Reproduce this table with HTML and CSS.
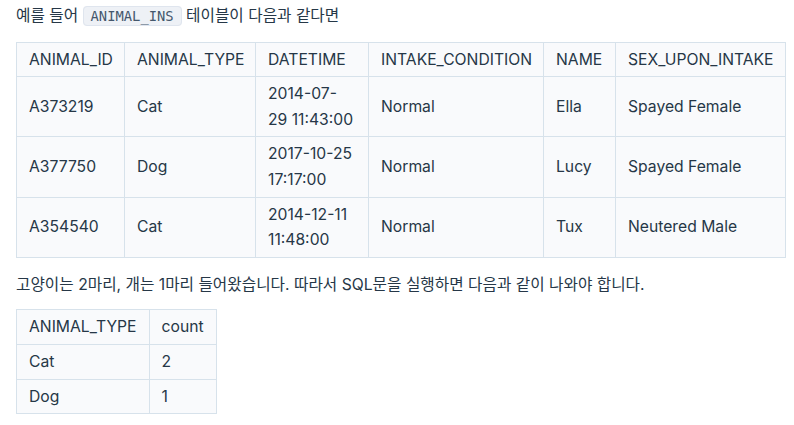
FILE: index.html
```html
<!DOCTYPE html>
<html lang="ko">
<head>
<meta charset="utf-8">
<link rel="stylesheet" href="styles.css">
</head>
<body>
<div class="content">
  <p class="text">예를 들어 <code class="code">ANIMAL_INS</code> 테이블이 다음과 같다면</p>
  <table class="tbl tbl-wide">
    <colgroup>
      <col class="c-id"><col class="c-type"><col class="c-dt"><col class="c-cond"><col class="c-name"><col class="c-sex">
    </colgroup>
    <thead>
      <tr><th>ANIMAL_ID</th><th>ANIMAL_TYPE</th><th>DATETIME</th><th>INTAKE_CONDITION</th><th>NAME</th><th>SEX_UPON_INTAKE</th></tr>
    </thead>
    <tbody>
      <tr><td>A373219</td><td>Cat</td><td>2014-07-<br>29 11:43:00</td><td>Normal</td><td>Ella</td><td>Spayed Female</td></tr>
      <tr><td>A377750</td><td>Dog</td><td>2017-10-25 17:17:00</td><td>Normal</td><td>Lucy</td><td>Spayed Female</td></tr>
      <tr><td>A354540</td><td>Cat</td><td>2014-12-11 11:48:00</td><td>Normal</td><td>Tux</td><td>Neutered Male</td></tr>
    </tbody>
  </table>
  <p class="text">고양이는 2마리, 개는 1마리 들어왔습니다. 따라서 SQL문을 실행하면 다음과 같이 나와야 합니다.</p>
  <table class="tbl">
    <thead>
      <tr><th>ANIMAL_TYPE</th><th>count</th></tr>
    </thead>
    <tbody>
      <tr><td>Cat</td><td>2</td></tr>
      <tr><td>Dog</td><td>1</td></tr>
    </tbody>
  </table>
</div>
</body>
</html>
```
FILE: styles.css
```css
html, body {
  margin: 0;
  padding: 0;
  background: #ffffff;
}
body {
  font-family: Inter, "Noto Sans CJK KR", sans-serif;
  font-size: 15.7px;
  color: #263747;
  line-height: 25.6px;
}
.content {
  padding: 3px 8px 0 16px;
}
.text {
  margin: 0 0 12px 0;
}
.code {
  font-family: "DejaVu Sans Mono", monospace;
  font-size: 13.8px;
  background: #eef1f6;
  border: 1px solid #dfe5ee;
  border-radius: 4px;
  padding: 1px 7px;
  color: #44576c;
}
.tbl {
  border-collapse: collapse;
  margin: 0 0 14px 0;
}
.tbl-wide {
  table-layout: fixed;
  width: 769px;
}
.c-id { width: 108px; }
.c-type { width: 131px; }
.c-dt { width: 113px; }
.c-cond { width: 175px; }
.c-name { width: 72px; }
.c-sex { width: 170px; }
.tbl th, .tbl td {
  border: 1px solid #d7e2eb;
  background: #f9fafc;
  padding: 4px 12px;
  text-align: left;
  font-weight: 400;
  vertical-align: middle;
}
```
